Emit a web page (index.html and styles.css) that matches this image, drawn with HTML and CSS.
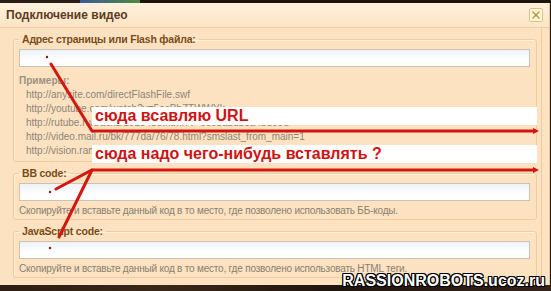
FILE: index.html
```html
<!DOCTYPE html>
<html lang="ru">
<head>
    <meta charset="UTF-8">
    <title>Подключение видео</title>
    <link rel="stylesheet" href="styles.css">
</head>
<body>
    <div class="desk-top"></div>

    <div class="dialog">
        <div class="titlebar">
            <span class="title">Подключение видео</span>
            <span class="close-btn">
                <svg width="12" height="12" viewBox="0 0 12 12">
                    <path d="M2.5 2.5 L9.5 9.5 M9.5 2.5 L2.5 9.5" stroke="#b3932f" stroke-width="1.2"/>
                </svg>
            </span>
        </div>

        <div class="panel">
            <fieldset class="group">
                <legend>Адрес страницы или Flash файла:</legend>
                <div class="field"></div>
                <div class="examples-title">Примеры:</div>
                <ul class="examples">
                    <li>http://anysite.com/directFlashFile.swf</li>
                    <li>http://youtube.com/watch?v=5asBbZTWWYk</li>
                    <li>http://rutube.ru/tracks/1023435.html?v=9ce3abdb0a4bd0ed</li>
                    <li>http://video.mail.ru/bk/777da/76/78.html?smslast_from_main=1</li>
                    <li>http://vision.rambler.ru/users/rambler/1/1/</li>
                </ul>
            </fieldset>

            <fieldset class="group">
                <legend>BB code:</legend>
                <div class="field"></div>
                <div class="hint">Скопируйте и вставьте данный код в то место, где позволено использовать ББ-коды.</div>
            </fieldset>

            <fieldset class="group">
                <legend>JavaScript code:</legend>
                <div class="field"></div>
                <div class="hint">Скопируйте и вставьте данный код в то место, где позволено использовать HTML теги.</div>
            </fieldset>
        </div>
    </div>

    <div class="desk-bottom"></div>

    <!-- annotations drawn on top of the screenshot -->
    <div class="note note-url">сюда всавляю URL</div>
    <div class="note note-code">сюда надо чего-нибудь вставлять ?</div>

    <svg class="marks" width="551" height="291" viewBox="0 0 551 291">
        <g stroke="#d3160e" stroke-width="3" fill="none" stroke-linecap="round">
            <polyline points="51,64 92,131 533,131"/>
            <polyline points="56,189 92,170 533,170"/>
            <line x1="92" y1="170" x2="59" y2="237"/>
        </g>
        <g fill="#d3160e">
            <polygon points="533,128 539,131 533,134"/>
            <polygon points="533,167 539,170 533,173"/>
        </g>
        <g fill="#7c1a12">
            <circle cx="47" cy="57" r="1.2"/>
            <circle cx="50" cy="192" r="1.2"/>
            <circle cx="50" cy="248" r="1.2"/>
        </g>
    </svg>

    <div class="watermark">RASSIONROBOTS.ucoz.ru</div>
</body>
</html>
```

FILE: styles.css
```css
* {
    box-sizing: border-box;
}

body {
    margin: 0;
    width: 551px;
    height: 291px;
    overflow: hidden;
    position: relative;
    background-color: #24170f;
    font-family: "Liberation Sans", Arial, sans-serif;
}

.desk-top {
    height: 3px;
    background: linear-gradient(90deg, #2a1d14 0, #2a1d14 80px, #3a5a9a 80px, #4f8a3a 140px, #1d140e 140px, #1d140e 100%);
}

.dialog {
    width: 550px;
    height: 282px;
    background-color: #fce2c1;
    border-right: 1px solid #e9c79a;
}

.titlebar {
    height: 25px;
    display: flex;
    align-items: center;
    justify-content: space-between;
    padding: 0 6px 0 6px;
    background: linear-gradient(#fff1df, #fde4c4);
    border-bottom: 1px solid #efcfa6;
}

.title {
    font-size: 12px;
    font-weight: bold;
    color: #5c3c1f;
}

.close-btn {
    width: 14px;
    height: 14px;
    display: flex;
    align-items: center;
    justify-content: center;
    border: 1px solid #dcc584;
    border-radius: 2px;
    background-color: #fff6d9;
}

.panel {
    width: 542px;
    height: 256px;
    padding: 5px 4px 0 13px;
    border-right: 1px solid #edcca1;
    display: flex;
    flex-direction: column;
    gap: 5px;
}

.group {
    margin: 0;
    padding: 0 6px 1px 5px;
    border: 1px solid #efcca0;
    border-radius: 3px;
    box-shadow: inset 1px 1px 0 #fff0dc;
}

.group legend {
    padding: 0 3px;
    font-size: 10.5px;
    line-height: 13px;
    letter-spacing: -0.2px;
    font-weight: bold;
    color: #7b4b16;
}

.field {
    height: 18px;
    margin-top: 3px;
    border: 1px solid #cbc2b3;
    background: linear-gradient(#eef3f8, #ffffff 70%);
}

.examples-title {
    margin-top: 7px;
    font-size: 10px;
    line-height: 14px;
    font-weight: bold;
    color: #9b9182;
}

.examples {
    list-style: none;
    margin: 0 0 2px 0;
    padding: 0 0 0 7px;
    font-size: 10px;
    line-height: 14px;
    color: #8c8578;
}

.hint {
    margin-top: 3px;
    font-size: 10px;
    line-height: 14px;
    letter-spacing: -0.2px;
    color: #8a8070;
}

.desk-bottom {
    height: 6px;
    background: linear-gradient(90deg, #2e1d12, #3a2718 30%, #20150d 60%, #34231a);
}

.note {
    position: absolute;
    left: 92px;
    width: 445px;
    height: 18px;
    padding-left: 3px;
    background-color: #ffffff;
    color: #cf1313;
    font-size: 16px;
    font-weight: bold;
    line-height: 18px;
}

.note-url {
    top: 107px;
}

.note-code {
    top: 145px;
}

.marks {
    position: absolute;
    top: 0;
    left: 0;
    pointer-events: none;
}

.watermark {
    position: absolute;
    right: 6px;
    bottom: 3px;
    color: #ffffff;
    font-size: 16px;
    font-weight: bold;
    line-height: 14px;
    text-shadow: 1px 0 0 #000, -1px 0 0 #000, 0 1px 0 #000, 0 -1px 0 #000,
        1px 1px 0 #000, -1px -1px 0 #000, 1px -1px 0 #000, -1px 1px 0 #000;
}
```
